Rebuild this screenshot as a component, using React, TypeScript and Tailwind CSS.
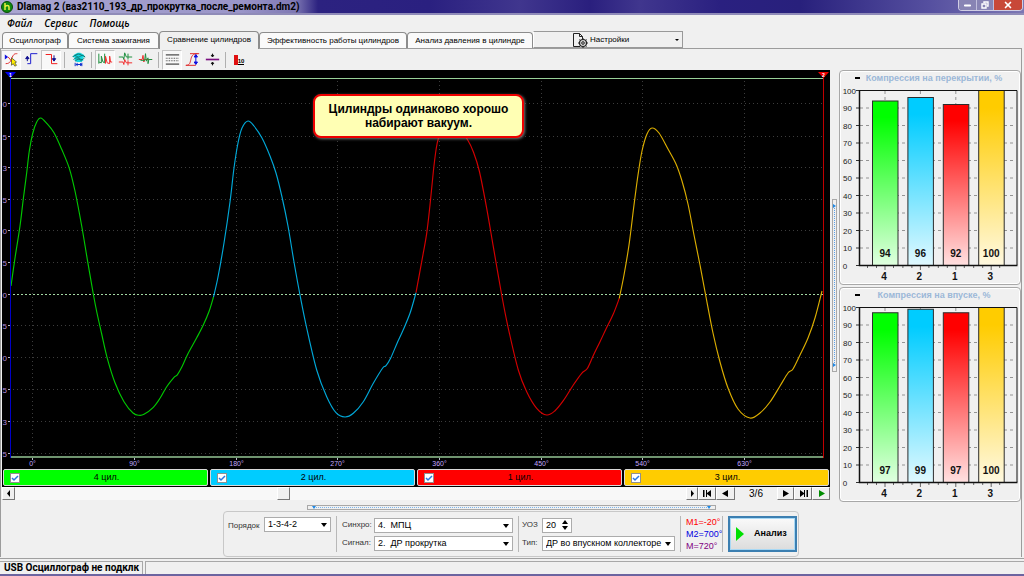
import React from 'react';
import { Minus, X } from 'lucide-react';

type Point = [number, number];

const smooth = (pts: Point[]) => {
  let d = `M${pts[0][0]} ${pts[0][1]}`;
  for (let i = 0; i < pts.length - 1; i++) {
    const p0 = pts[i - 1] ?? pts[i];
    const p1 = pts[i];
    const p2 = pts[i + 1];
    const p3 = pts[i + 2] ?? p2;
    d += ` C${p1[0] + (p2[0] - p0[0]) / 6} ${p1[1] + (p2[1] - p0[1]) / 6} ${p2[0] - (p3[0] - p1[0]) / 6} ${p2[1] - (p3[1] - p1[1]) / 6} ${p2[0]} ${p2[1]}`;
  }
  return d;
};

const waves: { color: string; pts: Point[] }[] = [
  {
    color: '#00c800',
    pts: [[11, 286], [15.3, 256], [20, 226], [23.3, 199], [26.7, 172.7], [29.3, 151], [32.7, 133.5], [36.7, 122], [40.7, 118], [46.7, 123.3], [54, 132.7], [61.7, 149.3], [69.3, 168.3], [75, 191], [81.7, 226], [87.3, 259.3], [93.3, 294], [97, 313], [101.7, 334], [107.3, 358.3], [115, 382.7], [124, 401.7], [133.3, 413.3], [139.3, 415.3], [144, 414.3], [153.3, 407.3], [160, 398.3], [166.7, 386.7], [174, 377.3], [177.3, 374.8], [181.7, 367.3], [187.7, 354.3], [196.7, 337.8], [203.3, 325], [209.3, 310.7], [213.5, 297]],
  },
  {
    color: '#00a8d8',
    pts: [[213.5, 297], [218, 277], [224, 243], [230, 202], [234, 168], [238, 143], [242, 128], [248, 121], [254, 126], [262, 138], [270, 156], [276, 173], [282, 197], [288, 226], [294, 262], [300, 295], [306.7, 328], [316.7, 370], [326.7, 396.7], [336, 412.7], [345, 417], [353.3, 413.3], [363.3, 401.7], [373.3, 383.3], [382.7, 368], [386, 365.7], [390.7, 358], [397.3, 342.7], [402.7, 331], [410, 313.3], [416, 292.7]],
  },
  {
    color: '#d40000',
    pts: [[416, 292.7], [421.7, 261.7], [426.7, 233.3], [430, 205], [433.3, 172], [436, 150], [438.5, 138], [444, 126], [450, 122], [458, 127], [467.7, 140], [473.3, 151.7], [479.3, 171], [486.7, 208.3], [493.3, 246.7], [501.7, 295], [508.3, 328.3], [518.3, 370], [526.7, 391.7], [536.7, 408.3], [546.7, 415], [555, 410.7], [563.3, 400.7], [573.3, 385], [581.7, 373.3], [587.3, 368.5], [593.3, 355.5], [600, 341.7], [606, 329], [613.3, 314], [619.3, 298.3]],
  },
  {
    color: '#dcae00',
    pts: [[619.3, 298.3], [624, 275], [629, 245], [634, 205], [638, 175], [642, 151], [647, 134], [652, 128], [659, 133], [668, 149], [676, 164], [682, 181], [688, 204], [694, 235], [700, 265], [706, 297], [713, 333], [720, 362], [728, 388], [738, 409], [750, 418], [760, 413], [770, 402], [780, 386], [788, 373], [793, 369], [800, 355], [808, 338], [815, 318], [822, 291]],
  },
];

const gridX = [32.5, 134.5, 236.5, 337.5, 439.5, 541.5, 642.5, 744.5];
const zeroY = 294.5;
const yTicks: [number, string][] = [
  [103.5, '0'], [136.5, '5'], [167.5, '3'], [199.5, '5'], [230.5, '0'], [262.5, '5'],
  [zeroY, '0'], [325.5, '5'], [357.5, '0'], [389.5, '5'], [421.5, '3'], [453.5, '5'],
];

function Waveform() {
  return (
    <svg viewBox="2 70 828 398" className="block h-auto w-full bg-black" role="img" aria-label="Сравнение цилиндров">
      {gridX.map((x) => (
        <line key={x} x1={x} x2={x} y1={81} y2={456} stroke="#3c3c3c" strokeDasharray="1 3" />
      ))}
      {yTicks.map(([y, label]) => (
        <g key={y}>
          <line x1={13} x2={823} y1={y} y2={y} stroke={y === zeroY ? '#a4d8a4' : '#3c3c3c'} strokeDasharray={y === zeroY ? '2 2' : '1 3'} />
          <line x1={8} x2={10} y1={y} y2={y} stroke="#b8b8c8" />
          <text x={7} y={y + 3} textAnchor="end" fontSize={8} fill="#b48cdc" fontFamily="Liberation Sans, sans-serif">{label}</text>
        </g>
      ))}
      <line x1={11} x2={823} y1={78.5} y2={78.5} stroke="#98d098" />
      <line x1={11} x2={823} y1={457} y2={457} stroke="#6f946f" strokeWidth={2} />
      {waves.map((w) => (
        <path key={w.color} d={smooth(w.pts)} fill="none" stroke={w.color} strokeWidth={1.15} />
      ))}
      <line x1={10.5} x2={10.5} y1={77} y2={458} stroke="#0000c8" />
      <line x1={823.5} x2={823.5} y1={77} y2={458} stroke="#c00000" />
      <path d="M5 72h11l-5.5 6z" fill="#0000f0" />
      <path d="M818 72h11l-5.5 6z" fill="#f00000" />
      <text x={10.5} y={77} textAnchor="middle" fontSize={5} fontWeight={700} fill="#fff" fontFamily="Liberation Sans, sans-serif">1</text>
      <text x={823.5} y={77} textAnchor="middle" fontSize={5} fontWeight={700} fill="#fff" fontFamily="Liberation Sans, sans-serif">2</text>
      {gridX.map((x, i) => (
        <g key={x}>
          <line x1={x} x2={x} y1={458} y2={460} stroke="#b8b8c8" />
          <text x={x} y={466} textAnchor="middle" fontSize={7} fill="#c0a8ff" fontFamily="Liberation Sans, sans-serif">{i * 90}°</text>
        </g>
      ))}
    </svg>
  );
}

const colors = ['#00ff00', '#00ccff', '#ff0000', '#ffcc00'];
const cylinders = ['4', '2', '1', '3'];

function BarPanel({ id, title, values }: { id: string; title: string; values: number[] }) {
  return (
    <section className="rounded-sm border border-[#a8a8a8] shadow-[inset_0_0_0_1px_#ffffff]">
      <div className="flex h-[14px] items-center">
        <button aria-label="Свернуть" className="ml-2 flex w-4 justify-center pl-0.5">
          <span className="h-0.5 w-[5px] bg-black" />
        </button>
        <h2 className="flex-1 pr-4 text-center text-[9px] leading-[14px] font-bold whitespace-nowrap text-[#9cb8d8]">{title}</h2>
      </div>
      <svg viewBox="840 85 180 199" className="block h-auto w-full" role="img" aria-label={title}>
        <defs>
          {colors.map((c, i) => (
            <linearGradient key={c} id={`${id}${i}`} x1="0" x2="0" y1="0" y2="1">
              <stop offset="0" stopColor={c} />
              <stop offset="0.1" stopColor={c} />
              <stop offset="1" stopColor={c} stopOpacity={0.12} />
            </linearGradient>
          ))}
        </defs>
        {Array.from({ length: 11 }, (_, i) => {
          const y = 265.5 - i * 17.5;
          return (
            <g key={i}>
              {i > 0 && i < 10 && <line x1={860} x2={1016} y1={y} y2={y} stroke="#949494" strokeDasharray="3 3" />}
              <line x1={856} x2={859} y1={y} y2={y} stroke="#333" />
              <text x={i === 10 ? 856 : i === 0 ? 845 : 852} y={y + 3} textAnchor={i === 0 ? 'middle' : 'end'} fontSize={8} fill="#222" fontFamily="Liberation Sans, sans-serif">{i * 10}</text>
            </g>
          );
        })}
        {values.map((v, i) => {
          const x = 872.5 + i * 35.4;
          const top = 265.5 - v * 1.75;
          return (
            <g key={i}>
              <line x1={x + 12.5} x2={x + 12.5} y1={91} y2={top} stroke="#949494" strokeDasharray="3 3" />
              <rect x={x} y={top} width={25.5} height={v * 1.75} fill="#fff" />
              <rect x={x} y={top} width={25.5} height={v * 1.75} fill={`url(#${id}${i})`} stroke="#2c2c2c" />
              <path d={`M${x + 12.5} 266v4M${x - 5} 266v2M${x + 4} 266v2M${x + 21} 266v2`} stroke="#666" />
              <text x={x + 12.5} y={256.5} textAnchor="middle" fontSize={10} fontWeight={700} fill="#111" fontFamily="Liberation Sans, sans-serif">{v}</text>
              <text x={x + 11.5} y={280} textAnchor="middle" fontSize={10} fontWeight={700} fill="#111" fontFamily="Liberation Sans, sans-serif">{cylinders[i]}</text>
            </g>
          );
        })}
        <path d="M859 90.5H1017V265" fill="none" stroke="#111" />
        <path d="M859.5 90V265.5H1017.5" fill="none" stroke="#111" strokeWidth={1.5} />
      </svg>
    </section>
  );
}

const icons: React.ReactNode[] = [
  <>
    <path d="M1 3l4 3-4 3z" fill="#1010e0" />
    <path d="M2 14C8 14 8 10 10 6S13 2 16 2M5 6l5 6" stroke="#e03030" />
    <path d="M9 7l6 5-2 1 2 3-2 1-2-3-2 2z" fill="#ffee00" stroke="#222" strokeWidth=".7" />
  </>,
  <>
    <path d="M4 14h4V2h8" stroke="#2020d0" />
    <path d="M4 11V6M2 8l2-3 2 3z" fill="#101090" stroke="#101090" />
  </>,
  <>
    <path d="M2 3h7v11h7" stroke="#f02020" />
    <path d="M12 4v6M10 8l2 3 2-3z" fill="#101090" stroke="#101090" />
  </>,
  <>
    <path d="M4 3l4-2h3l4 2 2 3-3 1 1 3-3 2H7l-3-2 1-3-3-1z" fill="#10d8e0" />
    <path d="M2 6c3-4 5 0 7 0s4-4 8 0M3 9c4-4 7-1 9 0s3-1 4-2M5 4c2-2 6-2 8 0M5 11c3-3 5-3 8 0" stroke="#14706c" />
    <path d="M5 13v4M13 13v4M6 15h7M8 13.5l-2 1.500 2 1.500M11 13.5l2 1.500-2 1.500" stroke="#1030d0" />
  </>,
  <>
    <path d="M1 2v12M1 12l3 1V5l2 7 2 1V2" stroke="#209040" />
    <path d="M9 14V5l2 8 3 1V5l1 7h2" stroke="#f03030" />
  </>,
  <>
    <path d="M1 6h5l1 3 1-8 2 5h7M12 2v7" stroke="#209040" />
    <path d="M1 12h5l1 3 1-6 2 4h7M12 10v6" stroke="#f03030" />
  </>,
  <>
    <path d="M1 9h4l1-5 1 8 1-3h9" stroke="#f03030" />
    <path d="M3 10h5l1-8 1 9 2-4v7l1-5h4" stroke="#209040" />
  </>,
  <>
    <path d="M1 3.500h16M1 14.500h16" stroke="#222" />
    <path d="M1 7.500h16M1 10.500h16" stroke="#444" strokeDasharray="1 1" />
  </>,
  <>
    <path d="M1 16c5 0 5-3 6-7s2-7 8-7M1 16h12M6 2h11" stroke="#e03030" />
    <path d="M13 4v10M11 6l2-3 2 3zM11 12l2 3 2-3z" fill="#1010e0" stroke="#1010e0" />
  </>,
  <>
    <path d="M1 9h16" stroke="#7b1080" strokeWidth="2" />
    <path d="M9 2v3M7.500 4L9 6l1.500-2zM9 16v-3M7.500 14L9 12l1.500 2z" fill="#111" stroke="#111" />
  </>,
];

function Tool({ index, label, pressed }: { index: number; label: string; pressed?: boolean }) {
  return (
    <button
      aria-label={label}
      aria-pressed={!!pressed}
      className={`flex h-5 w-5 items-center justify-center ${pressed ? 'border border-[#c4c4c4] border-r-white border-b-white bg-[#f8f8f8]' : ''}`}
    >
      <svg viewBox="0 0 18 18" className="h-[15px] w-[15px] shrink-0" fill="none" strokeWidth="1.2">{icons[index]}</svg>
    </button>
  );
}

const Divider = () => <span className="mx-[3px] h-4 w-px bg-[#b0b0b0]" />;

const tabBase = 'h-4 rounded-t-sm border border-b-0 border-[#8c8c8c] bg-[#fafafa] text-center whitespace-nowrap';

const navBtn = 'flex h-[13px] shrink-0 items-center justify-center border border-white border-r-[#777] border-b-[#777] bg-[#f0f0f0]';

function Glyph({ d, green }: { d: string; green?: boolean }) {
  return (
    <svg viewBox="0 0 9 7" className={`h-[7px] w-[9px] ${green ? 'fill-[#008c00]' : 'fill-black'}`}>
      <path d={d} />
    </svg>
  );
}

function Combo({ id, width, options }: { id: string; width: string; options: string[] }) {
  return (
    <div className={`relative ${width}`}>
      <select id={id} className="h-[15px] w-full appearance-none border border-[#acacac] bg-white pl-[3px] text-[9px] leading-[13px] text-black">
        {options.map((o) => (
          <option key={o}>{o}</option>
        ))}
      </select>
      <svg viewBox="0 0 6 4" className="pointer-events-none absolute top-[6px] right-1 h-1 w-1.5">
        <path d="M0 0h6L3 4z" />
      </svg>
    </div>
  );
}

export default function App() {
  return (
    <div className="flex min-h-screen flex-col bg-[#f0f0f0] font-['Liberation_Sans',sans-serif] text-[9px] text-black">
      <header className="flex h-[15px] items-start border-b-2 border-[#8f8bb8] bg-[linear-gradient(90deg,#aaa6d2_0px,#9a95c8_240px,#7f79b4_295px,#2c2280_318px,#2a2080_430px,#40368e_520px,#2a1f7e_590px,#40368e_640px,#2a2080_720px,#28207c_800px,#5650a0_930px,#7c78b4_100%)]">
        <svg viewBox="0 0 12 12" className="mt-px ml-px h-3 w-3 shrink-0">
          <circle cx="6" cy="6" r="5.500" fill="#108a10" stroke="#0a4a0a" />
          <path d="M4 2v7M4 6c1-2 4-2 4 0v3" fill="none" stroke="#e8f040" strokeWidth="1.500" />
        </svg>
        <h1 className="ml-1 flex-1 font-[Roboto,sans-serif] text-[10px] leading-[14px] font-bold whitespace-nowrap">Dlamag 2 (ваз2110_193_др_прокрутка_после_ремонта.dm2)</h1>
        <div className="mr-px flex h-[11px] overflow-hidden rounded-b-sm border border-t-0 border-[#d0cee4] text-white">
          <button aria-label="Свернуть" className="flex w-[18px] items-center justify-center border-r border-[#c0bedc] bg-[#8884b4]">
            <Minus size={9} strokeWidth={5} />
          </button>
          <button aria-label="Восстановить" className="flex w-[17px] items-center justify-center border-r border-[#c0bedc] bg-[#8884b4]">
            <svg viewBox="0 0 8 8" className="h-2 w-2" fill="none" stroke="#fff" strokeWidth="1.400">
              <path d="M3 2V1h4v4H6M1 3h4v4H1z" />
            </svg>
          </button>
          <button aria-label="Закрыть" className="flex w-[28px] items-center justify-center bg-[#c84838]">
            <X size={10} strokeWidth={4} />
          </button>
        </div>
      </header>

      <nav className="flex h-4 items-center gap-3 pl-[7px] font-['Open_Sans',sans-serif] text-[10px] leading-4 font-semibold italic">
        <button>Файл</button>
        <button>Сервис</button>
        <button>Помощь</button>
      </nav>

      <div className="flex items-end pl-0.5 text-[8px]" role="tablist">
        <button role="tab" aria-selected="false" className={`${tabBase} w-[66px]`}>Осциллограф</button>
        <button role="tab" aria-selected="false" className={`${tabBase} w-[91px]`}>Система зажигания</button>
        <button role="tab" aria-selected="true" className="relative z-10 -mb-px h-[18px] w-[100px] rounded-t-sm border border-b-0 border-[#8c8c8c] bg-[#f0f0f0] pb-0.5 text-center whitespace-nowrap">Сравнение цилиндров</button>
        <button role="tab" aria-selected="false" className={`${tabBase} w-[148px]`}>Эффективность работы цилиндров</button>
        <button role="tab" aria-selected="false" className={`${tabBase} w-[126px]`}>Анализ давления в цилиндре</button>
        <button className="flex h-[17px] w-[150px] items-center border border-white border-t-[#999] border-r-[#999] border-b-[#999] pr-[3px] pl-[38px]">
          <svg viewBox="0 0 16 16" className="h-4 w-4" fill="none" stroke="#222">
            <path d="M8 14.500H1.500v-13h6l3 3V7" />
            <path d="M7.500 1.500v3h3" />
            <circle cx="11" cy="11" r="3.500" fill="#d8d8d8" strokeWidth="1.200" />
            <circle cx="11" cy="11" r="1.300" />
            <path d="M11 6v1.500M11 14.500V16M6 11h1.500M14.500 11H16M7.500 7.500l1 1M13.500 13.500l1 1M14.500 7.500l-1 1M8.500 13.500l-1 1" />
          </svg>
          <span className="ml-0.5 flex-1 text-left">Настройки</span>
          <svg viewBox="0 0 4 2" className="h-0.5 w-1"><path d="M0 0h4L2 2z" /></svg>
        </button>
      </div>

      <main className="mr-0.5 flex flex-1 flex-col border-t border-r border-l border-[#9c9c9c]">
        <div className="flex h-[21px] items-center" role="toolbar">
          <Tool index={0} label="Курсор" pressed />
          <Tool index={1} label="Фронт" />
          <Tool index={2} label="Спад" pressed />
          <Divider />
          <Tool index={3} label="Масштаб" />
          <Divider />
          <Tool index={4} label="Последовательно" pressed />
          <Tool index={5} label="Раздельно" />
          <Tool index={6} label="Наложение" />
          <Divider />
          <Tool index={7} label="Сетка" pressed />
          <Tool index={8} label="Амплитуда" />
          <Tool index={9} label="Ноль" />
          <Divider />
          <button aria-label="Гистограмма" className="flex h-5 w-5 items-center justify-center">
            <span className="h-2.5 w-1 bg-[#e01010]" />
            <span className="border-b border-black pt-[3px] text-[6px] leading-[6px] font-bold">10</span>
          </button>
        </div>

        <div className="flex items-start">
          <div className="min-w-0 flex-1 pl-px">
            <div className="relative bg-black">
              <Waveform />
              <div className="absolute top-6 left-[311px] w-[211px] rounded-lg border-2 border-[#ee0000] bg-[#ffffb4] px-2 py-1.5 text-center text-[12px] leading-[14px] font-bold shadow-[1px_1px_3px_#777777]">
                Цилиндры одинаково хорошо набирают вакуум.
              </div>
            </div>
            <div className="grid grid-cols-4 gap-0.5 bg-black p-px">
              {cylinders.map((c, i) => (
                <label key={c} className={`flex h-[17px] items-center rounded-xs border border-[#d8d8d8] px-[6px] ${['bg-[#00ff00]', 'bg-[#00ccff]', 'bg-[#ff0000]', 'bg-[#ffcc00]'][i]}`}>
                  <span className="relative flex h-[10px] w-[10px]">
                    <input type="checkbox" defaultChecked className="peer h-[10px] w-[10px] appearance-none border border-[#909090] bg-white" />
                    <svg viewBox="0 0 10 10" className="pointer-events-none absolute inset-0 hidden h-[10px] w-[10px] peer-checked:block" fill="none" stroke="#2878e0" strokeWidth="1.500">
                      <path d="M2 5l2 2 4-4" />
                    </svg>
                  </span>
                  <span className="flex-1 pr-2 text-center">{c} цил.</span>
                </label>
              ))}
            </div>
            <div className="flex h-[13px] items-center">
              <button aria-label="Влево" className={`${navBtn} w-[13px]`}><Glyph d="M6 0v7L3 3.500z" /></button>
              <div className="flex h-[13px] flex-1 bg-[#f8f8f8]">
                <span className="ml-[39%] h-[13px] w-[13px] border border-white border-r-[#777] border-b-[#777] bg-[#f0f0f0]" />
              </div>
              <button aria-label="Вправо" className={`${navBtn} w-[12px]`}><Glyph d="M3 0v7L6 3.500z" /></button>
              <button aria-label="В начало" className={`${navBtn} w-[18px]`}><Glyph d="M0 0h1.500v7H0zM8 0v7L4 4v-.5v3.500H3V0h1v3z" /></button>
              <button aria-label="Назад" className={`${navBtn} w-[19px]`}><Glyph d="M7 0v7L1 3.500z" /></button>
              <span className="w-[42px] text-center text-[10px]">3/6</span>
              <button aria-label="Вперёд" className={`${navBtn} w-[17px]`}><Glyph d="M2 0v7l6-3.500z" /></button>
              <button aria-label="В конец" className={`${navBtn} w-[18px]`}><Glyph d="M7.500 0H9v7H7.500zM1 0v7l4-3v3h1V0H5v3z" /></button>
              <button aria-label="Воспроизвести" className={`${navBtn} w-[18px]`}><Glyph d="M2 0v7l6-3.500z" green /></button>
            </div>
          </div>

          <div className="mt-[129px] ml-0.5 flex h-[173px] w-[5px] flex-col items-center justify-between border border-[#a8a8a8] py-1">
            <svg viewBox="0 0 3 4" className="h-1 w-[3px] fill-[#1e88e5]"><path d="M0 0l3 2-3 2z" /></svg>
            <span className="flex-1 border-l border-dotted border-[#5aa0e8]" />
            <svg viewBox="0 0 3 4" className="h-1 w-[3px] fill-[#1e88e5]"><path d="M0 0l3 2-3 2z" /></svg>
          </div>

          <div className="ml-0.5 flex w-[182px] flex-col gap-0.5">
            <BarPanel id="overlap" title="Компрессия на перекрытии, %" values={[94, 96, 92, 100]} />
            <BarPanel id="intake" title="Компрессия на впуске, %" values={[97, 99, 97, 100]} />
          </div>
        </div>

        <div className="flex flex-1 flex-col items-center pt-[3px]">
          <div className="flex h-[5px] w-[409px] items-center border border-[#a8a8a8] px-1">
            <svg viewBox="0 0 4 3" className="h-[3px] w-1 fill-[#1e88e5]"><path d="M0 0h4L2 3z" /></svg>
            <span className="flex-1 border-t border-dotted border-[#7ab4ec]" />
            <svg viewBox="0 0 4 3" className="h-[3px] w-1 fill-[#1e88e5]"><path d="M0 0h4L2 3z" /></svg>
          </div>
          <div className="mt-px flex h-[46px] items-center rounded-sm border border-[#c8c8c8] pr-px pl-1">
            <div className="flex h-[35px] items-start gap-1">
              <label htmlFor="order" className="w-8 pt-[3px] text-[8px] whitespace-nowrap text-[#333]">Порядок</label>
              <Combo id="order" width="w-[67px]" options={['1-3-4-2']} />
            </div>
            <span className="mx-[5px] h-9 w-px bg-[#b8b8b8]" />
            <div className="grid grid-cols-[32px_139px] items-center gap-y-[3px]">
              <label htmlFor="sync" className="text-[8px] whitespace-nowrap text-[#333]">Синхро:</label>
              <Combo id="sync" width="w-[139px]" options={['4. \u00a0МПЦ']} />
              <label htmlFor="signal" className="text-[8px] whitespace-nowrap text-[#333]">Сигнал:</label>
              <Combo id="signal" width="w-[139px]" options={['2. \u00a0ДР прокрутка']} />
            </div>
            <span className="mr-[3px] ml-[5px] h-9 w-px bg-[#b8b8b8]" />
            <div className="grid grid-cols-[20px_133px] items-center gap-y-[3px]">
              <label htmlFor="uoz" className="text-[8px] text-[#333]">УОЗ</label>
              <div className="flex h-[15px] w-[30px] items-center justify-between border border-[#acacac] bg-white px-[3px]">
                <input id="uoz" type="text" defaultValue="20" className="w-3 text-[9px] leading-[13px]" />
                <svg viewBox="0 0 6 10" className="h-2.5 w-1.5"><path d="M0 4h6L3 0zM0 6h6l-3 4z" /></svg>
              </div>
              <label htmlFor="kind" className="text-[8px] text-[#333]">Тип:</label>
              <Combo id="kind" width="w-[133px]" options={['ДР во впускном коллекторе']} />
            </div>
            <span className="mx-[5px] h-9 w-px bg-[#b8b8b8]" />
            <div className="w-[36px] leading-3 whitespace-nowrap">
              <p className="text-[#ff0000]">M1=-20°</p>
              <p className="text-[#0000e0]">M2=700°</p>
              <p className="text-[#800080]">M=720°</p>
            </div>
            <span className="mr-[5px] h-9 w-px bg-[#b8b8b8]" />
            <button className="flex h-[36px] w-[69px] items-center border-2 border-[#3c7fb1] bg-linear-to-b from-[#fafafa] to-[#dcdcdc] pl-[6px] font-bold shadow-[inset_0_0_0_1px_#a8d8f4]">
              <svg viewBox="0 0 8 14" className="h-3.5 w-2 fill-[#00e000]"><path d="M0 0l8 7-8 7z" /></svg>
              <span className="ml-2.5">Анализ</span>
            </button>
          </div>
        </div>
      </main>

      <footer className="mt-px border-t border-[#a0a0a0] pt-0.5">
        <div className="flex gap-0.5">
          <div className="min-w-[143px] border-t border-r border-[#a8a8a8] pl-1 font-[Roboto,sans-serif] text-[10px] leading-[12px] font-bold whitespace-nowrap">USB Осциллограф не подклк</div>
          <div className="flex-1 border-t border-l border-[#a8a8a8]" />
        </div>
        <div className="h-0.5 bg-[#6c64a0]" />
      </footer>
    </div>
  );
}
